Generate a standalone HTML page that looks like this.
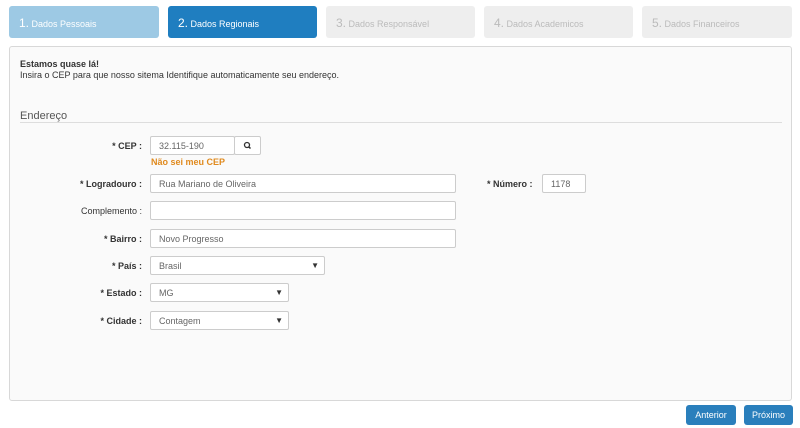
<!DOCTYPE html><html><head><meta charset="utf-8"><style>
*{box-sizing:border-box;margin:0;padding:0}
body{width:800px;height:428px;background:#fff;font-family:"Liberation Sans",sans-serif;font-size:9px;color:#333;position:relative;overflow:hidden}
.tab{position:absolute;top:6px;height:32px;border-radius:3px;padding:10px 10px;font-size:9px;color:#bbb;background:#eee}
.tab b{font-weight:normal;font-size:12px}
.t1{left:9px;width:150px;background:#9dc9e4;color:#fff}
.t2{left:168px;width:149px;background:#1f7ec0;color:#fff}
.panel{position:absolute;left:9px;top:46px;width:783px;height:355px;border:1px solid #d8d8d8;border-radius:3px;background:#fafafa}
.abs{position:absolute}
.lbl{position:absolute;text-align:right;font-size:9px;font-weight:bold;color:#333;width:142px;left:0}
.inp{position:absolute;background:#fff;border:1px solid #ccc;border-radius:2px;height:19px;padding:4px 8px;font-size:9px;color:#666}
.sel:after{content:"▼";position:absolute;right:5px;top:4px;font-size:8px;color:#333}
.btn{position:absolute;top:405px;height:20px;background:#2a7fbc;color:#fff;border-radius:3px;font-size:9px;text-align:center;line-height:20px}
</style></head><body>
<div class="tab t1"><b>1.</b> Dados Pessoais</div>
<div class="tab t2"><b>2.</b> Dados Regionais</div>
<div class="tab" style="left:326px;width:149px"><b>3.</b> Dados Responsável</div>
<div class="tab" style="left:484px;width:149px"><b>4.</b> Dados Academicos</div>
<div class="tab" style="left:642px;width:150px"><b>5.</b> Dados Financeiros</div>
<div class="panel"></div>
<div class="abs" style="left:20px;top:59px;font-weight:bold">Estamos quase lá!</div>
<div class="abs" style="left:20px;top:70px">Insira o CEP para que nosso sitema Identifique automaticamente seu endereço.</div>
<div class="abs" style="left:20px;top:110px;font-size:11px;color:#555">Endereço</div>
<div class="abs" style="left:20px;top:122px;width:762px;border-top:1px solid #ddd"></div>
<div class="lbl" style="top:141px">* CEP :</div>
<div class="inp" style="left:150px;top:136px;width:85px">32.115-190</div>
<div class="inp" style="left:234px;top:136px;width:27px;padding:0"><svg width="25" height="17" viewBox="0 0 25 17"><circle cx="12" cy="8" r="2.5" fill="none" stroke="#333" stroke-width="1.3"/><path d="M13.8 9.8L15.5 11.5" stroke="#333" stroke-width="1.5"/></svg></div>
<div class="abs" style="left:151px;top:157px;color:#e08a1e;font-weight:bold">Não sei meu CEP</div>
<div class="lbl" style="top:179px">* Logradouro :</div>
<div class="inp" style="left:150px;top:174px;width:306px">Rua Mariano de Oliveira</div>
<div class="abs" style="left:487px;top:179px;font-weight:bold">* Número :</div>
<div class="inp" style="left:542px;top:174px;width:44px">1178</div>
<div class="lbl" style="top:206px;font-weight:normal">Complemento :</div>
<div class="inp" style="left:150px;top:201px;width:306px"></div>
<div class="lbl" style="top:234px">* Bairro :</div>
<div class="inp" style="left:150px;top:229px;width:306px">Novo Progresso</div>
<div class="lbl" style="top:261px">* País :</div>
<div class="inp sel" style="left:150px;top:256px;width:175px">Brasil</div>
<div class="lbl" style="top:288px">* Estado :</div>
<div class="inp sel" style="left:150px;top:283px;width:139px">MG</div>
<div class="lbl" style="top:316px">* Cidade :</div>
<div class="inp sel" style="left:150px;top:311px;width:139px">Contagem</div>
<div class="btn" style="left:686px;width:50px">Anterior</div>
<div class="btn" style="left:744px;width:49px">Próximo</div>
</body></html>
